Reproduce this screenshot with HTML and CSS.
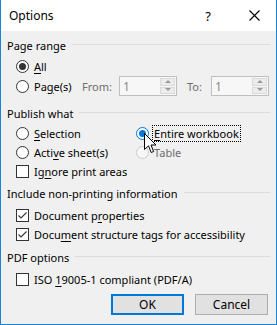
FILE: index.html
```html
<!DOCTYPE html>
<html>
<head>
<meta charset="utf-8">
<link rel="stylesheet" href="styles.css">
</head>
<body>
<div class="window">
  <div class="titlebar">
    <span class="title">Options</span>
    <span class="tb-btn help">?</span>
    <span class="tb-btn close"><svg width="11" height="11" viewBox="0 0 11 11"><path d="M0.5 0.5 L10.5 10.5 M10.5 0.5 L0.5 10.5" stroke="#000" stroke-width="1.1" fill="none"/></svg></span>
  </div>
  <div class="content">
    <div class="group-h"><span>Page range</span><i class="rule"></i></div>
    <div class="row first"><span class="radio checked"></span><span><u>A</u>ll</span></div>
    <div class="row pages">
      <span class="opt"><span class="radio"></span><span>Pa<u>g</u>e(s)</span></span>
      <span class="dis from-lbl">From:</span>
      <span class="spin"><span class="val">1</span><span class="arrows"><b class="up"></b><b class="down"></b></span></span>
      <span class="dis to-lbl">To:</span>
      <span class="spin"><span class="val">1</span><span class="arrows"><b class="up"></b><b class="down"></b></span></span>
    </div>

    <div class="group-h sec"><span>Publish what</span><i class="rule"></i></div>
    <div class="publish">
      <div class="row"><span class="radio"></span><span><u>S</u>election</span></div>
      <div class="row"><span class="radio hover checked"></span><span class="focus"><u>E</u>ntire workbook</span></div>
      <div class="row"><span class="radio"></span><span>Acti<u>v</u>e sheet(s)</span></div>
      <div class="row"><span class="radio disabled"></span><span class="dis">Table</span></div>
      <div class="row"><span class="check"></span><span>Ig<u>n</u>ore print areas</span></div>
    </div>

    <div class="group-h sec2"><span>Include non-printing information</span><i class="rule"></i></div>
    <div class="row first2"><span class="check on"><svg width="11" height="11" viewBox="0 0 11 11"><path d="M1.5 5.5 L4 8 L9.5 2.5" stroke="#333" stroke-width="1.1" fill="none"/></svg></span><span>Document p<u>r</u>operties</span></div>
    <div class="row"><span class="check on"><svg width="11" height="11" viewBox="0 0 11 11"><path d="M1.5 5.5 L4 8 L9.5 2.5" stroke="#333" stroke-width="1.1" fill="none"/></svg></span><span>Docu<u>m</u>ent structure tags for accessibility</span></div>

    <div class="group-h sec3"><span>PDF options</span><i class="rule"></i></div>
    <div class="row first2"><span class="check"></span><span>ISO <u>1</u>9005-1 compliant (PDF/A)</span></div>

    <div class="buttons">
      <span class="btn default">OK</span>
      <span class="btn">Cancel</span>
    </div>
  </div>
  <svg class="cursor" width="13" height="21" viewBox="0 0 13 21"><path d="M0.5 0.5 L0.5 16.5 L4.5 12.8 L7.2 19.5 L9.6 18.5 L7 12 L12 12 Z" fill="#fff" stroke="#000" stroke-width="1"/></svg>
</div>
</body>
</html>
```

FILE: styles.css
```css
html, body {
  margin: 0;
  padding: 0;
}
body {
  width: 277px;
  height: 325px;
  font-family: "Noto Sans", "Open Sans", sans-serif;
  font-size: 11px;
  color: #000;
}
.window {
  position: relative;
  width: 277px;
  height: 325px;
  box-sizing: border-box;
  border: 1px solid #1883d7;
  border-top: none;
  background: #f0f0f0;
  display: flex;
  flex-direction: column;
}
.titlebar {
  height: 31px;
  background: #fff;
  display: flex;
  align-items: center;
}
.title {
  margin-left: 8px;
  font-size: 12px;
}
.tb-btn {
  width: 46px;
  height: 31px;
  display: flex;
  align-items: center;
  justify-content: center;
}
.help {
  margin-left: auto;
  font-size: 13px;
}
.close {
  margin-right: -1px;
}
.content {
  flex: 1;
  padding: 6px 6px 0 6px;
  display: flex;
  flex-direction: column;
}
.group-h {
  height: 16px;
  display: flex;
  align-items: center;
  white-space: nowrap;
}
.group-h .rule {
  flex: 1;
  height: 1px;
  background: #dcdcdc;
  margin-left: 6px;
  margin-top: -2px;
}
.sec { margin-top: 9px; }
.sec2 { margin-top: 4px; }
.sec3 { margin-top: 5px; }
.row {
  height: 19px;
  display: flex;
  align-items: center;
  padding-left: 9px;
  white-space: nowrap;
}
.first { margin-top: 4px; }
.first2 { margin-top: 5px; }
.radio {
  width: 13px;
  height: 13px;
  box-sizing: border-box;
  border: 1px solid #333;
  border-radius: 50%;
  background: #fff;
  margin-right: 5px;
  display: flex;
  align-items: center;
  justify-content: center;
  flex: none;
}
.radio.checked::after {
  content: "";
  width: 7px;
  height: 7px;
  border-radius: 50%;
  background: #333;
}
.radio.hover {
  border-color: #0078d7;
}
.radio.hover::after {
  background: #0078d7;
}
.radio.disabled {
  border-color: #ccc;
  background: #f7f7f7;
}
.check {
  width: 13px;
  height: 13px;
  box-sizing: border-box;
  border: 1px solid #333;
  background: #fff;
  margin-right: 5px;
  flex: none;
  display: flex;
}
.dis {
  color: #6d6d6d;
}
.pages {
  height: 20px;
  padding-left: 9px;
}
.pages .opt {
  display: flex;
  align-items: center;
  width: 66px;
}
.from-lbl {
  width: 37px;
}
.to-lbl {
  margin-left: 10px;
  width: 24px;
}
.spin {
  width: 58px;
  height: 20px;
  box-sizing: border-box;
  border: 1px solid #bfbfbf;
  background: #f7f7f7;
  display: flex;
  align-items: center;
  padding: 1px;
}
.spin .val {
  flex: 1;
  color: #8a8a8a;
  padding-left: 2px;
  font-size: 12px;
}
.arrows {
  width: 15px;
  height: 16px;
  display: flex;
  flex-direction: column;
  gap: 1px;
}
.arrows b {
  flex: 1;
  background: #ececec;
  border: 1px solid #dadada;
  position: relative;
}
.arrows b::after {
  content: "";
  position: absolute;
  left: 50%;
  top: 50%;
  margin-left: -3px;
  margin-top: -2px;
  border-left: 3px solid transparent;
  border-right: 3px solid transparent;
}
.arrows .up::after {
  border-bottom: 3px solid #9a9a9a;
}
.arrows .down::after {
  border-top: 3px solid #9a9a9a;
}
.publish {
  margin-top: 3px;
  display: grid;
  grid-template-columns: 120px 1fr;
}
.focus {
  outline: 1px dotted #000;
  outline-offset: 0;
  padding: 0 1px;
  margin-left: -1px;
  line-height: 15px;
}
.buttons {
  margin-top: 5px;
  display: flex;
  justify-content: flex-end;
  gap: 11px;
  padding-right: 2px;
}
.btn {
  width: 73px;
  height: 21px;
  box-sizing: border-box;
  border: 1px solid #adadad;
  background: #e1e1e1;
  display: flex;
  align-items: center;
  justify-content: center;
  font-size: 12px;
}
.btn.default {
  border: 2px solid #0078d7;
}
.cursor {
  position: absolute;
  left: 143px;
  top: 133px;
}
u {
  text-decoration-thickness: 1px;
  text-underline-offset: 2px;
}
```
